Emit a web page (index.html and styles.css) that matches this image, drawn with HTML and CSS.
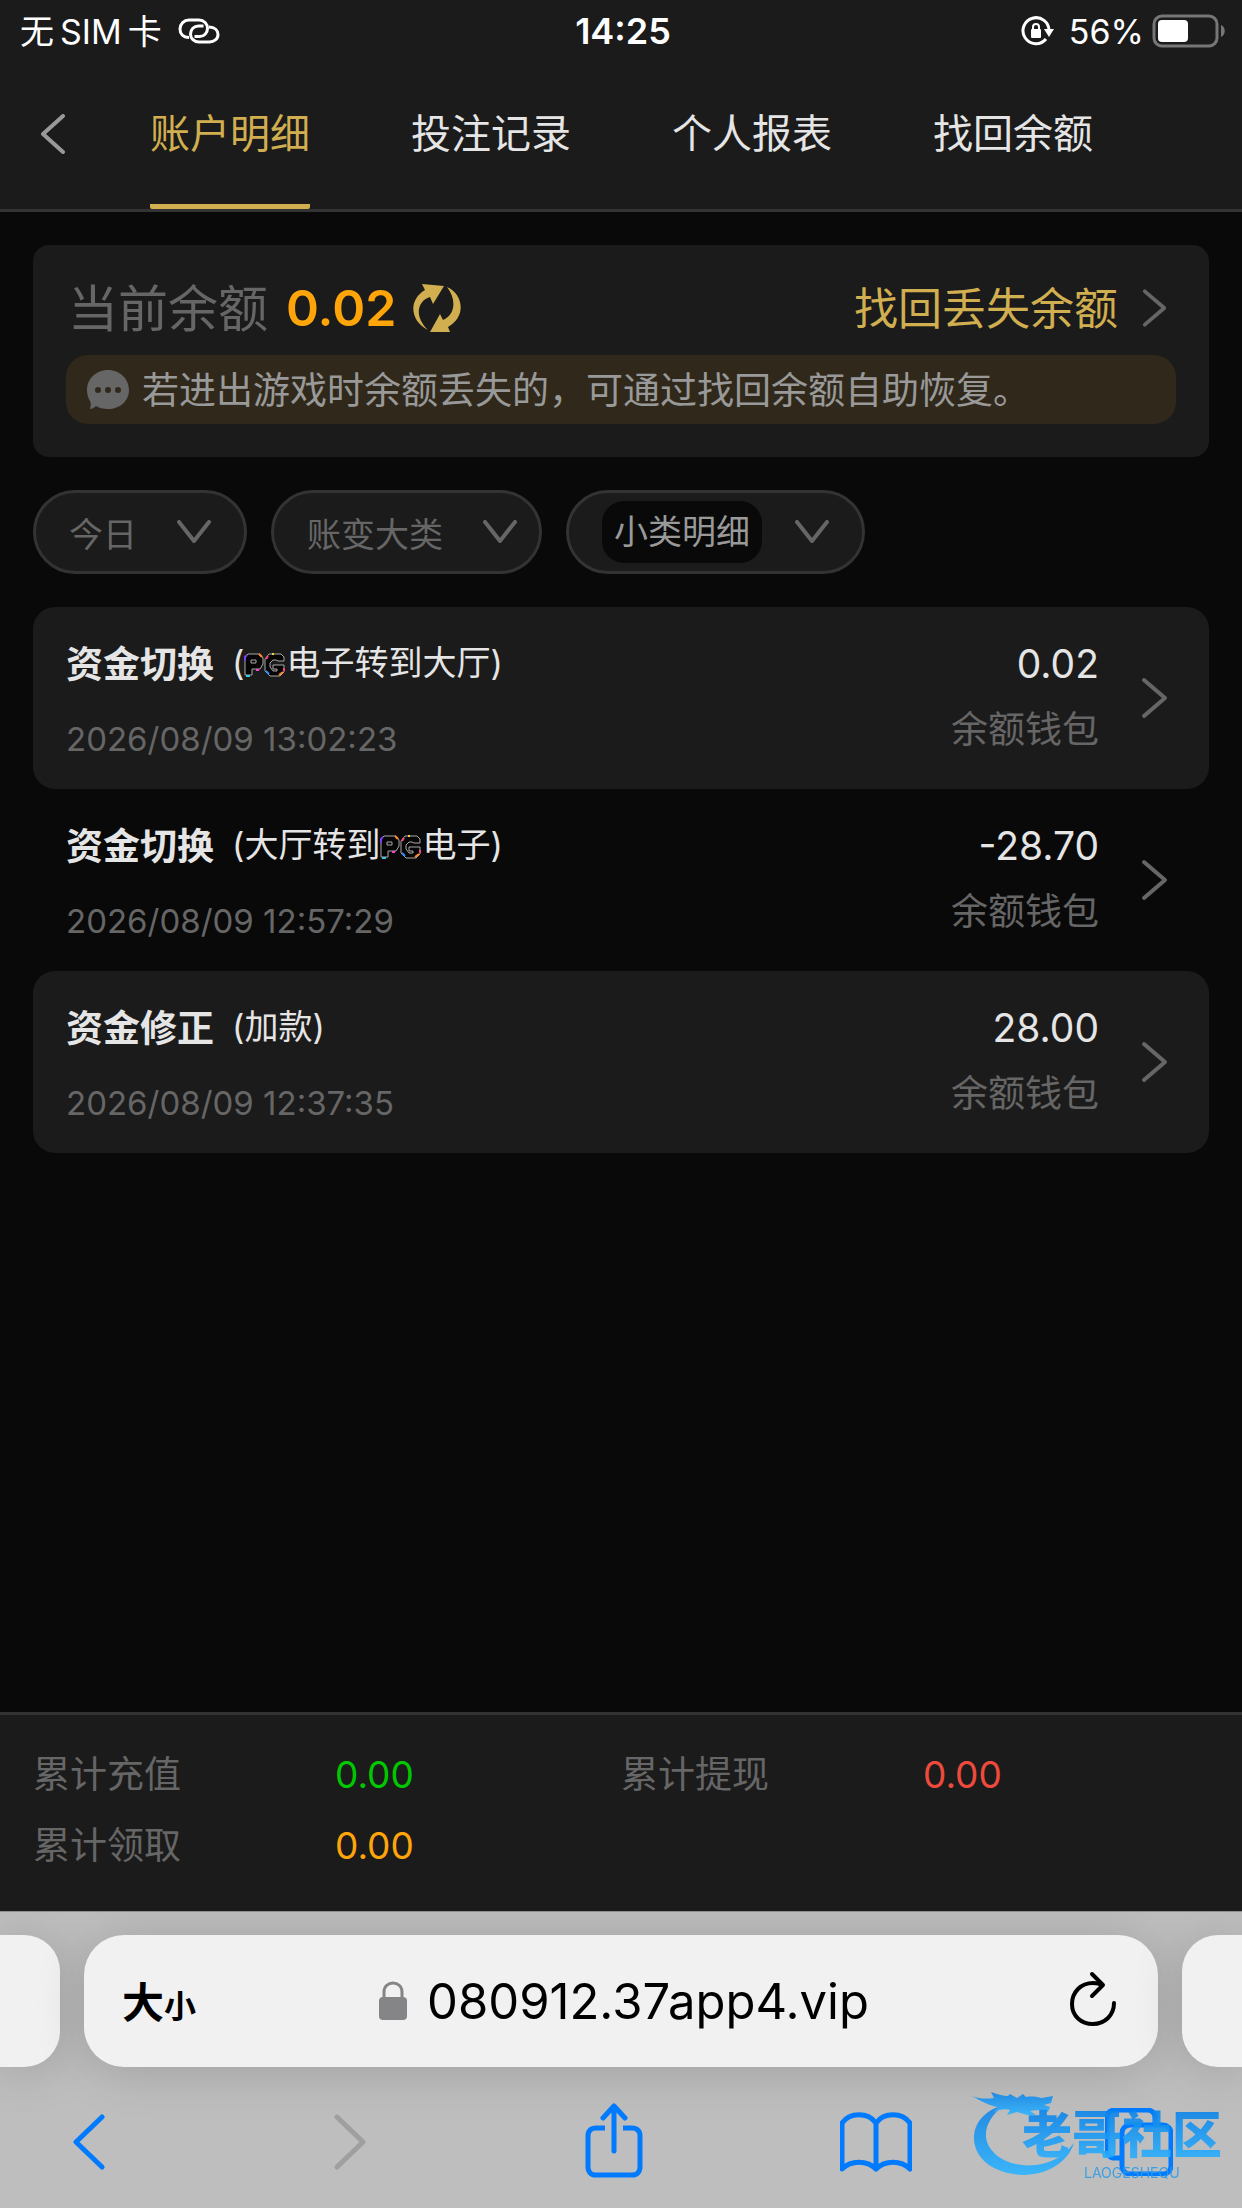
FILE: index.html
```
<!DOCTYPE html>
<html lang="zh-CN">

<head>
    <meta charset="UTF-8">
    <meta name="viewport" content="width=device-width, initial-scale=1">
    <title>账户明细</title>
    <link rel="stylesheet" href="styles.css">
</head>

<body>
    <!-- Icônes partagées -->
    <svg class="sprite" aria-hidden="true">
        <symbol id="right" viewBox="0 0 28 42">
            <path d="M3 3l21 18L3 39" />
        </symbol>
        <symbol id="down" viewBox="0 0 34 24">
            <path d="M2 2l15 19L32 2" />
        </symbol>
        <symbol id="pg" viewBox="0 0 42 24">
            <g fill="#050505" stroke="#a8a8a8" stroke-width="1">
                <path d="M1 4l3-3h12l3 4v6l-3 5H8v6H1z" />
                <path d="M7 7h5v3H7z" />
                <path d="M25 1h12l3 3v4h-6l-2-1h-3l-3 3v4l3 4h4v-2h-4v-4h11v7l-4 4H26l-5-5V6z" />
            </g>
            <path stroke="#7a3ff2" stroke-width="2" d="M1 8V4l2-2" />
            <path stroke="#ff8a1f" stroke-width="2" d="M15 1l3 3M35 22l4-3" />
            <path stroke="#35c9e8" stroke-width="2" d="M2 23h4" />
            <path stroke="#ff3fd0" stroke-width="2" d="M12 17h3" />
            <path stroke="#ff3f7f" stroke-width="2" d="M22 6l2-3M40 15v3" />
            <path stroke="#ffd23f" stroke-width="2" d="M28 1h2" />
            <path stroke="#2f8cff" stroke-width="2" d="M22 18l3 3" />
        </symbol>
    </svg>

    <div class="status-bar">
        <div class="status-left">
            <div class="carrier"><span>无</span><span>SIM</span><span>卡</span></div>
            <svg width="42" height="26" viewBox="0 0 42 26" fill="none" stroke="#fff" stroke-width="3">
                <path d="M11 19.500C5 19.500 2 15.500 2 11c0-5 4-9 9-9h10c5 0 8.500 4 8.500 8.500s-3.500 8-8 8h-5" />
                <path d="M31 9c6 0 9 3.500 9 7.500 0 4.500-4 7.500-8.500 7.500H21c-5 0-8.500-3.500-8.500-8s3.500-8 8-8h5" />
            </svg>
        </div>
        <strong class="status-time">14:25</strong>
        <div class="status-right">
            <svg width="34" height="32" viewBox="0 0 34 32">
                <path d="M25 24A13 13 0 1 1 28 16" fill="none" stroke="#fff" stroke-width="3" />
                <path d="M23 14h10l-5 8z" fill="#fff" />
                <rect x="10" y="14" width="10" height="9" rx="1" fill="#fff" />
                <path d="M12 15v-3a3 3 0 0 1 6 0v3" fill="none" stroke="#fff" stroke-width="2" />
            </svg>
            <span>56%</span>
            <svg width="74" height="34" viewBox="0 0 74 34">
                <rect x="2" y="2" width="63" height="30" rx="8" fill="none" stroke="#767676" stroke-width="3" />
                <rect x="6" y="6" width="30" height="22" rx="4" fill="#fff" />
                <path d="M69 11c5 2 5 10 0 12z" fill="#767676" />
            </svg>
        </div>
    </div>

    <header class="nav">
        <button class="nav-back" aria-label="返回">
            <svg width="26" height="40" viewBox="0 0 26 40"><path d="M23 2L3 20l20 18" /></svg>
        </button>
        <nav class="tabs">
            <a href="#" class="tab active">账户明细</a>
            <a href="#" class="tab">投注记录</a>
            <a href="#" class="tab">个人报表</a>
            <a href="#" class="tab">找回余额</a>
        </nav>
    </header>

    <main class="content">
        <section class="balance">
            <div class="balance-row">
                <span class="balance-label">当前余额</span>
                <strong class="balance-value">0.02</strong>
                <button class="refresh" aria-label="刷新">
                    <svg width="50" height="49" viewBox="0 0 50 49" fill="#d1ae50">
                        <path d="M10 0l22 2-11 18-3-7C5 17 2 33 16 46-2 37-4 16 13 6z" />
                        <path d="M38 48l-20 0 10-18 3 6C43 31 45 16 35 3c16 7 20 29 1 40z" />
                    </svg>
                </button>
                <a href="#" class="recover"><span>找回丢失余额</span>
                    <svg class="chevron" width="26" height="42"><use href="#right" /></svg>
                </a>
            </div>
            <p class="notice">
                <svg width="44" height="40" viewBox="0 0 44 40">
                    <path d="M22 0c12 0 21 9 21 20s-9 19-21 19c-5 0-9-1-12-3-2 2-4 3-6 3 1-3 1-6 0-8C2 28 1 24 1 20 1 9 10 0 22 0z" fill="#666" />
                    <g fill="#30291b">
                        <circle cx="12" cy="20" r="3" />
                        <circle cx="22" cy="20" r="3" />
                        <circle cx="32" cy="20" r="3" />
                    </g>
                </svg>
                <span>若进出游戏时余额丢失的，可通过找回余额自助恢复。</span>
            </p>
        </section>

        <div class="filters">
            <button class="filter"><span>今日</span>
                <svg class="chevron" width="34" height="24"><use href="#down" /></svg>
            </button>
            <button class="filter"><span>账变大类</span>
                <svg class="chevron" width="34" height="24"><use href="#down" /></svg>
            </button>
            <button class="filter filter-sub"><span class="filter-chip">小类明细</span>
                <svg class="chevron" width="34" height="24"><use href="#down" /></svg>
            </button>
        </div>

        <ul class="records">
            <li>
                <a href="#" class="record">
                    <div class="record-main">
                        <div class="record-title"><strong>资金切换</strong><span>(<svg class="pg" width="42" height="24"><use href="#pg" /></svg>电子转到大厅)</span></div>
                        <time>2026/08/09 13:02:23</time>
                    </div>
                    <div class="record-side">
                        <span class="amount">0.02</span>
                        <span class="wallet">余额钱包</span>
                    </div>
                    <svg class="chevron" width="28" height="42"><use href="#right" /></svg>
                </a>
            </li>
            <li>
                <a href="#" class="record">
                    <div class="record-main">
                        <div class="record-title"><strong>资金切换</strong><span>(大厅转到<svg class="pg" width="42" height="24"><use href="#pg" /></svg>电子)</span></div>
                        <time>2026/08/09 12:57:29</time>
                    </div>
                    <div class="record-side">
                        <span class="amount">-28.70</span>
                        <span class="wallet">余额钱包</span>
                    </div>
                    <svg class="chevron" width="28" height="42"><use href="#right" /></svg>
                </a>
            </li>
            <li>
                <a href="#" class="record">
                    <div class="record-main">
                        <div class="record-title"><strong>资金修正</strong><span>(加款)</span></div>
                        <time>2026/08/09 12:37:35</time>
                    </div>
                    <div class="record-side">
                        <span class="amount">28.00</span>
                        <span class="wallet">余额钱包</span>
                    </div>
                    <svg class="chevron" width="28" height="42"><use href="#right" /></svg>
                </a>
            </li>
        </ul>
    </main>

    <dl class="totals">
        <dt>累计充值</dt>
        <dd class="green">0.00</dd>
        <dt>累计提现</dt>
        <dd class="red">0.00</dd>
        <dt>累计领取</dt>
        <dd class="orange">0.00</dd>
    </dl>

    <!-- Barre du navigateur -->
    <footer class="browser">
        <div class="address-row">
            <div class="side-tab side-left"></div>
            <div class="address">
                <button class="text-size" aria-label="大小">大<small>小</small></button>
                <div class="url">
                    <svg width="28" height="40" viewBox="0 0 28 40">
                        <rect x="0" y="16" width="28" height="23" rx="4" fill="#858587" />
                        <path d="M5 17v-6c0-12 18-12 18 0v6" fill="none" stroke="#858587" stroke-width="3" />
                    </svg>
                    <span>080912.37app4.vip</span>
                </div>
                <button class="reload" aria-label="重新载入">
                    <svg width="46" height="60" viewBox="0 0 46 60" fill="none" stroke="#000" stroke-width="4" stroke-linecap="round" stroke-linejoin="round">
                        <path d="M32 14c-3-2-6-2-9-2C11 12 2 21 2 33s9 20 21 20 21-9 21-21" />
                        <path d="M22 3l11 11-11 11" />
                    </svg>
                </button>
            </div>
            <div class="side-tab side-right"></div>
        </div>
        <div class="toolbar">
            <button aria-label="后退">
                <svg width="34" height="56" viewBox="0 0 34 56"><path d="M31 3L5 28l26 25" /></svg>
            </button>
            <button class="disabled" aria-label="前进" disabled>
                <svg width="34" height="56" viewBox="0 0 34 56"><path d="M3 3l26 25L3 53" /></svg>
            </button>
            <button aria-label="分享">
                <svg width="58" height="78" viewBox="0 0 58 78">
                    <path stroke-linecap="butt" d="M20 25h-9c-5 0-8 3-8 8v31c0 5 3 8 8 8h36c5 0 8-3 8-8V33c0-5-3-8-8-8h-9" />
                    <path d="M29 48V4M18 15L29 3l11 12" />
                </svg>
            </button>
            <button aria-label="书签">
                <svg width="72" height="60" viewBox="0 0 72 60">
                    <path d="M36 11C28 0 10 0 2 11v46c9-9 25-9 34 0 9-9 25-9 34 0V11C62 0 44 0 36 11zM36 11v46" />
                </svg>
            </button>
            <button aria-label="标签页">
                <svg width="68" height="68" viewBox="0 0 68 68">
                    <path stroke-linecap="butt" d="M17 50h-7c-5 0-8-3-8-8V10c0-5 3-8 8-8h32c5 0 8 3 8 8v5" />
                    <rect x="17" y="17" width="49" height="49" rx="8" />
                </svg>
            </button>
        </div>
        <div class="watermark">
            <svg width="110" height="84" viewBox="0 0 110 84">
                <defs>
                    <linearGradient id="sea" x1="0" y1="0" x2="0" y2="1">
                        <stop offset="0" stop-color="#1384e6" />
                        <stop offset="1" stop-color="#2db4ff" />
                    </linearGradient>
                </defs>
                <g fill="url(#sea)">
                    <path d="M32 13C-4 22-8 60 22 76c30 15 70 5 80-25-10 13-22 20-38 22-26 3-48-10-50-28-1-12 6-22 18-32z" />
                    <path d="M0 4c8 3 14 3 22 2L19 0c6 2 12 4 17 4l2-2 7 4 6-4 3 3c7-1 11 0 16 1l11-2-2 7-7 2 6 2-2 5-10-2-8 1 6 4-9 0-10-3-10 3 3-5c-6-2-12 0-17 3l5-6c-8-1-17-6-26-11z" />
                </g>
            </svg>
            <div class="watermark-text">
                <b>老哥社区</b>
                <span>LAOGESHEQU</span>
            </div>
        </div>
    </footer>
</body>

</html>
```
FILE: styles.css
```
* {
    box-sizing: border-box;
}

body {
    margin: 0;
    min-height: 100vh;
    display: flex;
    flex-direction: column;
    background-color: #090909;
    color: #e5e5e5;
    font-family: Inter, "Noto Sans CJK SC", sans-serif;
    font-size: 37px;
}

a {
    color: inherit;
    text-decoration: none;
}

button {
    padding: 0;
    border: none;
    background: none;
    color: inherit;
    font: inherit;
    cursor: pointer;
}

svg {
    display: block;
    flex: none;
}

.sprite {
    position: absolute;
    width: 0;
    height: 0;
}

.chevron {
    fill: none;
    stroke: #666;
    stroke-width: 4;
    stroke-linecap: round;
    stroke-linejoin: round;
}

/* Barre d'état */
.status-bar {
    display: grid;
    grid-template-columns: 1fr auto 1fr;
    align-items: center;
    height: 62px;
    padding: 0 16px 0 20px;
    background-color: #1b1b1b;
    color: #fff;
    font-size: 34px;
}

.status-left,
.status-right {
    display: flex;
    align-items: center;
    gap: 16px;
}

.carrier {
    display: flex;
    align-items: baseline;
    gap: 6px;
    padding-bottom: 4px;
}

.status-right {
    justify-content: flex-end;
    gap: 8px;
}

.status-right span {
    padding-left: 6px;
}

.status-time {
    font-size: 36px;
    font-weight: 600;
}

/* Navigation */
.nav {
    display: flex;
    height: 150px;
    padding-left: 40px;
    background-color: #1b1b1b;
    border-bottom: 3px solid #333;
}

.nav-back {
    width: 110px;
    padding-bottom: 3px;
}

.nav-back path {
    fill: none;
    stroke: #999;
    stroke-width: 4;
    stroke-linecap: round;
    stroke-linejoin: round;
}

.tabs {
    display: flex;
    gap: 101px;
}

.tab {
    border-bottom: 5px solid transparent;
    border-radius: 2px;
    font-size: 40px;
    line-height: 144px;
    white-space: nowrap;
}

.tab.active {
    color: #d1ae50;
    border-bottom-color: #d1ae50;
}

/* Contenu */
.content {
    flex: 1;
    padding: 33px;
}

.balance {
    height: 212px;
    padding: 24px 33px;
    background-color: #1b1b1b;
    border-radius: 16px;
}

.balance-row {
    display: flex;
    align-items: center;
    height: 78px;
}

.balance-label {
    padding: 0 0 6px 2px;
    color: #666;
    font-size: 50px;
}

.balance-value {
    margin: 0 16px 0 18px;
    color: #ffa50a;
    font-size: 50px;
    font-weight: 600;
}

.recover {
    display: flex;
    align-items: center;
    gap: 24px;
    margin-left: auto;
    padding-right: 8px;
    color: #d1ae50;
    font-size: 44px;
}

.recover span {
    padding-bottom: 4px;
}

.notice {
    display: flex;
    align-items: center;
    gap: 12px;
    height: 69px;
    margin: 8px 0 0;
    padding: 0 20px;
    background-color: #30291b;
    border-radius: 22px;
    color: #999;
    white-space: nowrap;
}

.notice span {
    padding-bottom: 4px;
}

.filters {
    display: flex;
    gap: 24px;
    margin: 33px 0;
}

.filter {
    display: flex;
    align-items: center;
    gap: 40px;
    height: 84px;
    padding: 0 33px;
    border: 3px solid #333;
    border-radius: 42px;
    background-color: #1b1b1b;
    color: #666;
    font-size: 34px;
}

.filter:nth-child(2) {
    padding-right: 22px;
}

.filter-sub {
    gap: 33px;
}

.filter-chip {
    padding: 0 12px;
    border-radius: 22px;
    background-color: #090909;
    color: #999;
    line-height: 62px;
}

.records {
    margin: 0;
    padding: 0;
    list-style: none;
}

.record {
    display: flex;
    align-items: center;
    height: 182px;
    padding: 0 40px 0 33px;
    border-radius: 22px;
}

.records li:nth-child(odd) .record {
    background-color: #1b1b1b;
}

.record-main {
    flex: 1;
}

.record-title {
    display: flex;
    align-items: center;
    gap: 18px;
    height: 50px;
    font-size: 34px;
}

.record-title strong {
    font-size: 37px;
    font-weight: 700;
}

.record-title span {
    padding-bottom: 4px;
}

.pg {
    display: inline-block;
    fill: none;
    vertical-align: -2px;
}

.record time {
    display: block;
    margin-top: 32px;
    color: #666;
    font-size: 33px;
    line-height: 40px;
}

.record-side {
    display: flex;
    flex-direction: column;
    margin-right: 42px;
    text-align: right;
}

.amount {
    font-size: 39px;
    line-height: 64px;
}

.wallet {
    color: #666;
    line-height: 68px;
}

/* Totaux */
.totals {
    display: grid;
    grid-template-columns: repeat(4, 1fr);
    align-content: start;
    height: 199px;
    margin: 0;
    padding: 24px 33px;
    background-color: #1b1b1b;
    border-top: 3px solid #333;
    color: #666;
    line-height: 71px;
}

.totals dd {
    margin: 0;
    padding-left: 8px;
}

.green {
    color: #00c800;
}

.red {
    color: #f04a3c;
}

.orange {
    color: #ffa50a;
}

/* Navigateur */
.browser {
    position: relative;
    height: 297px;
    padding-top: 23px;
    border-top: 1px solid #8e8e8e;
    background-color: #bebebe;
    overflow: hidden;
    color: #000;
}

.address-row {
    display: flex;
    gap: 24px;
    height: 132px;
}

.side-tab {
    width: 60px;
    background-color: #f1f1f1;
    box-shadow: 0 4px 50px rgba(0, 0, 0, 0.16);
}

.side-left {
    border-radius: 0 36px 36px 0;
}

.side-right {
    border-radius: 36px 0 0 36px;
}

.address {
    display: grid;
    grid-template-columns: 1fr auto 1fr;
    align-items: center;
    flex: 1;
    padding: 0 42px 0 38px;
    border-radius: 40px;
    background-color: #f1f1f1;
    box-shadow: 0 4px 50px rgba(0, 0, 0, 0.16);
}

.text-size {
    justify-self: start;
    padding-bottom: 4px;
    font-size: 42px;
    font-weight: 700;
}

.text-size small {
    font-size: 32px;
}

.url {
    display: flex;
    align-items: center;
    gap: 20px;
    padding-left: 10px;
    font-size: 49px;
}

.reload {
    justify-self: end;
}

.toolbar {
    display: flex;
    align-items: center;
    justify-content: space-between;
    height: 150px;
    padding: 0 67px 0 52px;
}

.toolbar button {
    display: flex;
    justify-content: center;
    width: 72px;
}

.toolbar svg {
    fill: none;
    stroke: #007aff;
    stroke-width: 5;
    stroke-linecap: round;
    stroke-linejoin: round;
}

.toolbar .disabled svg {
    stroke: #9f9f9f;
}

.watermark {
    position: absolute;
    right: 20px;
    bottom: 26px;
    display: flex;
    opacity: 0.9;
    pointer-events: none;
}

.watermark-text {
    display: flex;
    flex-direction: column;
    margin-left: -60px;
    padding-top: 14px;
}

.watermark-text b {
    background: linear-gradient(#0a80e8, #2db4ff);
    background-clip: text;
    color: transparent;
    font-size: 50px;
    font-weight: 900;
    line-height: 58px;
}

.watermark-text span {
    padding-left: 62px;
    color: #2f9be8;
    font-size: 14px;
    line-height: 18px;
}
```
